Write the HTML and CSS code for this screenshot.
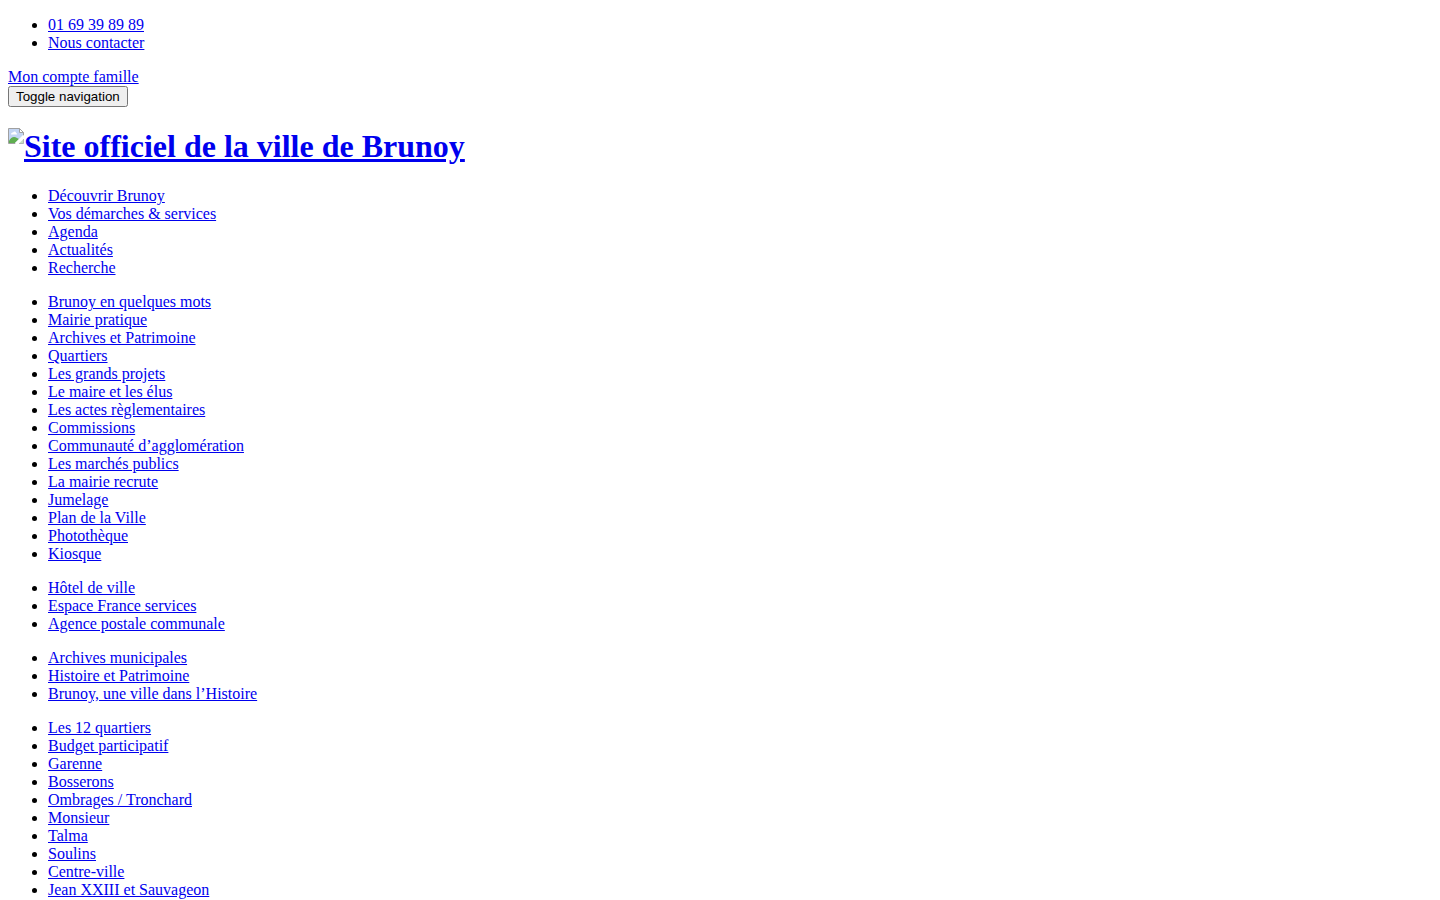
FILE: index.html
```html
<!DOCTYPE html>
<html lang="fr">
<head>
<meta charset="utf-8">
<title>Site officiel de la ville de Brunoy</title>
<link rel="stylesheet" href="styles.css">
</head>
<body>
<header>
<ul class="list">
<li><a href="#">01 69 39 89 89</a></li>
<li><a href="#">Nous contacter</a></li>
</ul>
<a href="#">Mon compte famille</a>
<div><button class="toggle" type="button">Toggle navigation</button></div>
<h1 class="brand"><a class="brand-link" href="#"><svg class="brand-icon" viewBox="0 0 16 16" aria-hidden="true"><path d="M.5 15.5V.5h11l4 4v3l-8 8z" fill="#c3d5f3"/><path d="M1 15v-2c2-4 5-5 8-3l2 1-4 4z" fill="#5fae50"/><path d="M3 6.500c0-1.500 1-2 2-2 1-1.500 3-1 3 .5 1 0 1.500 1.500.5 1.500z" fill="#fff"/><path d="M7.500 15.500h-7V.5h11l4 4v3" fill="none" stroke="#a0a0a0"/><path d="M11.500.5v4h4z" fill="#fff" stroke="#a0a0a0"/><path d="M15.500 7.500l-8 8" stroke="#fff" stroke-width="1.500"/><path d="M15.500 11v4.500H11" fill="#c6dfc1" stroke="#a0a0a0" stroke-width=".7"/></svg><span>Site officiel de la ville de Brunoy</span></a></h1>
</header>
<nav>
<ul class="list">
<li><a href="#">Découvrir Brunoy</a></li>
<li><a href="#">Vos démarches &amp; services</a></li>
<li><a href="#">Agenda</a></li>
<li><a href="#">Actualités</a></li>
<li><a href="#">Recherche</a></li>
</ul>
<ul class="list">
<li><a href="#">Brunoy en quelques mots</a></li>
<li><a href="#">Mairie pratique</a></li>
<li><a href="#">Archives et Patrimoine</a></li>
<li><a href="#">Quartiers</a></li>
<li><a href="#">Les grands projets</a></li>
<li><a href="#">Le maire et les élus</a></li>
<li><a href="#">Les actes règlementaires</a></li>
<li><a href="#">Commissions</a></li>
<li><a href="#">Communauté d’agglomération</a></li>
<li><a href="#">Les marchés publics</a></li>
<li><a href="#">La mairie recrute</a></li>
<li><a href="#">Jumelage</a></li>
<li><a href="#">Plan de la Ville</a></li>
<li><a href="#">Photothèque</a></li>
<li><a href="#">Kiosque</a></li>
</ul>
<ul class="list">
<li><a href="#">Hôtel de ville</a></li>
<li><a href="#">Espace France services</a></li>
<li><a href="#">Agence postale communale</a></li>
</ul>
<ul class="list">
<li><a href="#">Archives municipales</a></li>
<li><a href="#">Histoire et Patrimoine</a></li>
<li><a href="#">Brunoy, une ville dans l’Histoire</a></li>
</ul>
<ul class="list">
<li><a href="#">Les 12 quartiers</a></li>
<li><a href="#">Budget participatif</a></li>
<li><a href="#">Garenne</a></li>
<li><a href="#">Bosserons</a></li>
<li><a href="#">Ombrages / Tronchard</a></li>
<li><a href="#">Monsieur</a></li>
<li><a href="#">Talma</a></li>
<li><a href="#">Soulins</a></li>
<li><a href="#">Centre-ville</a></li>
<li><a href="#">Jean XXIII et Sauvageon</a></li>
</ul>
</nav>
</body>
</html>
```
FILE: styles.css
```css
body {
  margin: 0 8px;
  background: #fff;
  color: #000;
  font-family: "Liberation Serif", "Times New Roman", serif;
  font-size: 16px;
  line-height: 18px;
}

a {
  color: #0000ee;
  text-decoration: underline;
}

.list {
  margin: 16px 0;
  padding-left: 40px;
}

.toggle {
  font-family: "Liberation Sans", Arial, sans-serif;
}

.brand {
  margin: 21px 0 22px;
  font-size: 32px;
  line-height: 37px;
  text-rendering: optimizeLegibility;
}

.brand-link {
  display: flex;
  align-items: flex-start;
}

.brand-icon {
  width: 16px;
  height: 16px;
}
```
